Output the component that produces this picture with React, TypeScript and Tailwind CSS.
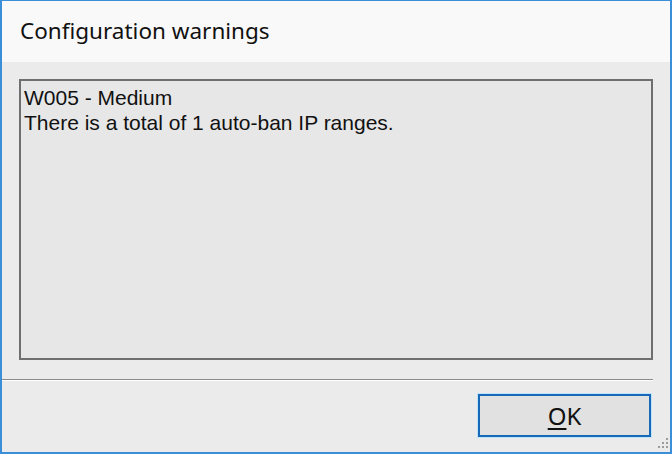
export default function App() {
  return (
    <div className="w-[672px] h-[454px] overflow-hidden bg-[#3a8fd8] p-[2px] pt-px">
      <div className="flex h-full w-full flex-col bg-[#ebebeb]">
        {/* Title area */}
        <div className="h-[61px] shrink-0 bg-[#f9f9f9] pl-[18px] pt-[15px] font-['Noto_Sans',sans-serif] text-[22.5px] leading-[30px] text-[#111]">
          Configuration warnings
        </div>

        {/* Message box */}
        <div className="mx-[17px] mt-[17px] h-[281px] shrink-0 border-2 border-[#6f6f6f] bg-[#e7e7e7] px-[3px] pt-[4px] font-['Liberation_Sans',Arial,sans-serif] text-[21px] leading-[25px] text-[#111]">
          <div>W005 - Medium</div>
          <div>There is a total of 1 auto-ban IP ranges.</div>
        </div>

        {/* Separator */}
        <div className="mt-[19px] mr-[17px] h-[2px] shrink-0 border-t border-[#8a8a8a] border-b border-b-white" />

        {/* Footer */}
        <div className="relative flex flex-1 justify-end pr-[19px] pt-[13px]">
          <button className="h-[43px] w-[173px] border-2 border-[#1868b8] bg-[#e1e1e1] font-['Noto_Sans',sans-serif] text-[24px] leading-none text-[#111] shadow-[0_0_0_1px_#bfe3f8]">
            <span className="underline decoration-2 underline-offset-[3px]">O</span>K
          </button>
          <div className="absolute bottom-[4px] right-[2px] grid grid-cols-3 gap-[2px]">
            <span className="h-[2px] w-[2px]" />
            <span className="h-[2px] w-[2px]" />
            <span className="h-[2px] w-[2px] bg-[#9c9c9c]" />
            <span className="h-[2px] w-[2px]" />
            <span className="h-[2px] w-[2px] bg-[#9c9c9c]" />
            <span className="h-[2px] w-[2px] bg-[#9c9c9c]" />
            <span className="h-[2px] w-[2px] bg-[#9c9c9c]" />
            <span className="h-[2px] w-[2px] bg-[#9c9c9c]" />
            <span className="h-[2px] w-[2px] bg-[#9c9c9c]" />
          </div>
        </div>
      </div>
    </div>
  );
}
